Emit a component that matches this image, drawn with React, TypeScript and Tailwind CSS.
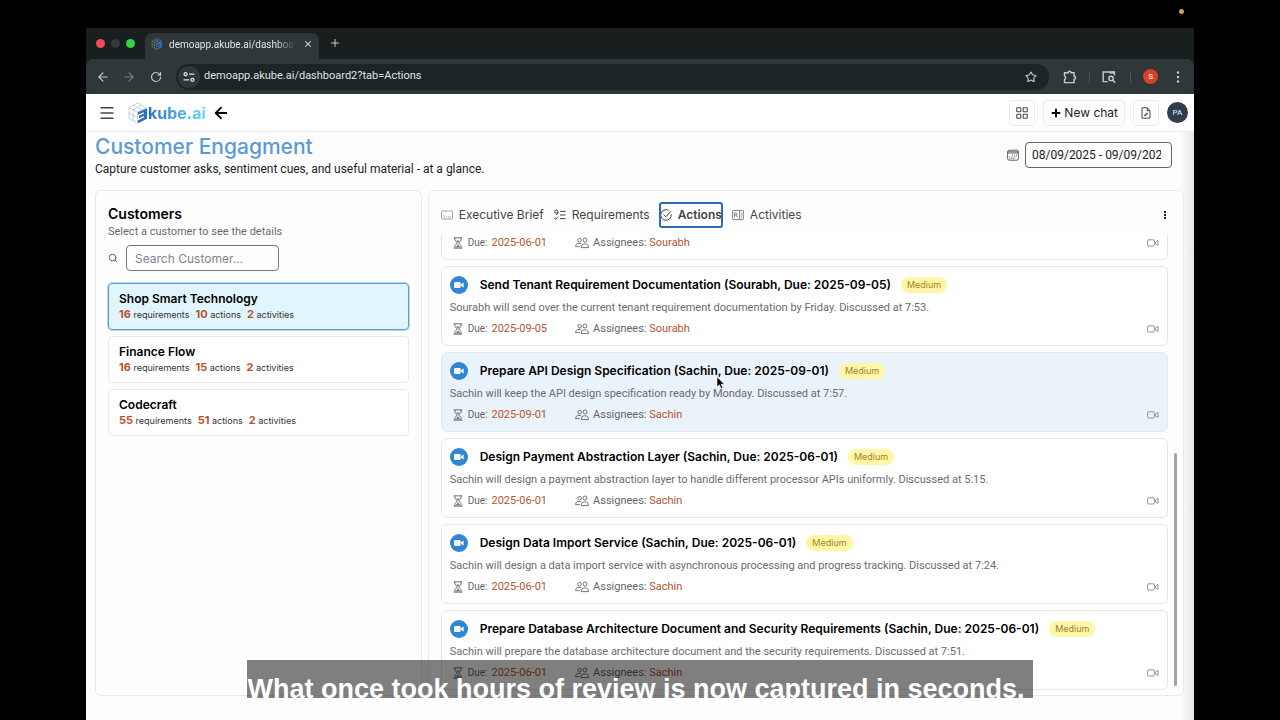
import type { ReactNode } from 'react';
import { ArrowLeft, ArrowRight, LayoutGrid, Menu, Plus, RotateCw, Search, Star, X } from 'lucide-react';

type Customer = { name: string; requirements: number; actions: number; activities: number };
type Action = { title: string; text: string; due: string; assignee: string };

const customers: Customer[] = [
    { name: 'Shop Smart Technology', requirements: 16, actions: 10, activities: 2 },
    { name: 'Finance Flow', requirements: 16, actions: 15, activities: 2 },
    { name: 'Codecraft', requirements: 55, actions: 51, activities: 2 },
];

const actions: Action[] = [
    {
        title: 'Send Tenant Requirement Documentation (Sourabh, Due: 2025-09-05)',
        text: 'Sourabh will send over the current tenant requirement documentation by Friday. Discussed at 7:53.',
        due: '2025-09-05',
        assignee: 'Sourabh',
    },
    {
        title: 'Prepare API Design Specification (Sachin, Due: 2025-09-01)',
        text: 'Sachin will keep the API design specification ready by Monday. Discussed at 7:57.',
        due: '2025-09-01',
        assignee: 'Sachin',
    },
    {
        title: 'Design Payment Abstraction Layer (Sachin, Due: 2025-06-01)',
        text: 'Sachin will design a payment abstraction layer to handle different processor APIs uniformly. Discussed at 5:15.',
        due: '2025-06-01',
        assignee: 'Sachin',
    },
    {
        title: 'Design Data Import Service (Sachin, Due: 2025-06-01)',
        text: 'Sachin will design a data import service with asynchronous processing and progress tracking. Discussed at 7:24.',
        due: '2025-06-01',
        assignee: 'Sachin',
    },
    {
        title: 'Prepare Database Architecture Document and Security Requirements (Sachin, Due: 2025-06-01)',
        text: 'Sachin will prepare the database architecture document and the security requirements. Discussed at 7:51.',
        due: '2025-06-01',
        assignee: 'Sachin',
    },
];

function HourglassIcon() {
    return (
        <svg className="w-3 h-3" viewBox="0 0 12 14" fill="none" stroke="#555" strokeWidth={1}>
            <path d="M1 1h10M1 13h10M2.4 1v2.8L5.2 7l-2.8 3.2V13M9.6 1v2.8L6.8 7l2.8 3.2V13" />
            <path d="M3.8 4h4.4L6 6.4zM6 8.4l2.8 3.8H3.2z" fill="#777" stroke="none" />
        </svg>
    );
}

function PeopleIcon() {
    return (
        <svg className="w-3.5 h-3" viewBox="0 0 14 12" fill="none" stroke="#666" strokeWidth={0.9}>
            <circle cx="4.6" cy="3.2" r="1.8" />
            <circle cx="10" cy="3" r="2" />
            <path d="M6.2 10.6c0-2.4 1-3.8 3.7-3.8s3.6 1.4 3.6 3.8zM.6 9.6h4.2M.6 9.6c0-2 1-3.2 3.4-3.2 1 0 1.7.1 2.3.4" />
        </svg>
    );
}

function VideoIcon() {
    return (
        <svg className="w-3 h-2.5" viewBox="0 0 12 10" fill="none" stroke="#888" strokeWidth={0.9}>
            <rect x=".6" y="1.8" width="6.8" height="6.2" rx="1.2" />
            <path d="M8.4 4.2l2.6-1.8v5L8.4 5.8z" />
        </svg>
    );
}

function CubeMark({ className }: { className: string }) {
    return (
        <svg className={className} viewBox="0 0 20 22" fill="none">
            <path d="M1 5.5L9.5 1 18 5.5 9.5 10zM1 5.5v11l8.5 4.5V10M5.2 3.2l8.6 4.5M13.8 3.2L5.2 7.8v10.8M1 11l8.5 4.5" stroke="#9cb9cf" strokeWidth={0.6} />
            <path d="M10 10.2l9-4v10.6L10 21.2v-3l6-2.8v-1.4l-5 2.2v-2.4l5-2.2v-1.4l-6 2.6z" fill="#2a6fc8" />
        </svg>
    );
}

function Meta({ due, assignee }: { due: string; assignee: string }) {
    return (
        <div className="flex items-center h-4 text-[11px] leading-4 text-[#666]">
            <span className="w-4 flex justify-center"><HourglassIcon /></span>
            <span className="ml-0.5 text-[10px]">Due:</span>
            <span className="ml-1 text-[#b8532f]">{due}</span>
            <span className="ml-7"><PeopleIcon /></span>
            <span className="ml-1">Assignees: <span className="text-[#b8532f]">{assignee}</span></span>
            <span className="ml-auto"><VideoIcon /></span>
        </div>
    );
}

function ActionCard({ action, active }: { action: Action; active: boolean }) {
    return (
        <article className={`h-20 shrink-0 rounded-md border px-2 pt-1.5 ${active ? 'bg-[#eaf2fa] border-[#dfe8f1]' : 'bg-white border-[#e6e6e6]'}`}>
            <div className="flex items-center h-6">
                <span className="w-[18px] h-[18px] rounded-full bg-[#2f86d6] flex items-center justify-center">
                    <svg className="w-3 h-2" viewBox="0 0 12 8" fill="white">
                        <rect x="1" y="1" width="6.6" height="6" rx="1.2" />
                        <path d="M8 3.2l2.6-1.8v5.2L8 4.8z" />
                    </svg>
                </span>
                <h3 className="ml-3 font-[Inter] text-[12px] leading-5 font-semibold text-black">{action.title}</h3>
                <span className="ml-2.5 rounded-full bg-[#fff6a8] px-1.5 font-[Inter] text-[9px] leading-4 text-[#a08328]">Medium</span>
            </div>
            <p className="mt-[3px] mb-[5px] text-[11px] leading-4 text-[#6b6b6b]">{action.text}</p>
            <Meta due={action.due} assignee={action.assignee} />
        </article>
    );
}

function Tab({ icon, label, active = false }: { icon: ReactNode; label: string; active?: boolean }) {
    return (
        <button
            role="tab"
            aria-selected={active}
            className={`flex items-center gap-1.5 h-6 font-[Inter] text-[12px] text-[#444] ${active ? 'font-semibold rounded-xs outline-2 -outline-offset-1 outline-[#2c6bb5]' : ''}`}
        >
            {icon}
            {label}
        </button>
    );
}

function BrowserChrome() {
    return (
        <div className="bg-[#181f1e]">
            <div className="flex items-end h-[31px]">
                <div className="flex items-center gap-1.5 h-[31px] pl-2.5">
                    <span className="w-[9px] h-[9px] rounded-full bg-[#ee4b50]"></span>
                    <span className="w-[9px] h-[9px] rounded-full bg-[#31393a]"></span>
                    <span className="w-[9px] h-[9px] rounded-full bg-[#35cf48]"></span>
                </div>
                <div className="ml-2.5 flex items-center w-[174px] h-[26px] rounded-t-lg bg-[#2f3739] pl-1.5 pr-1.5 pb-1">
                    <CubeMark className="w-3 h-3" />
                    <span className="ml-1.5 flex-1 overflow-hidden whitespace-nowrap text-[10px] text-[#dfe3e4] mask-r-from-85%">demoapp.akube.ai/dashboard2</span>
                    <button aria-label="Close tab" className="ml-2"><X className="w-2.5 h-2.5 text-[#dfe3e4]" strokeWidth={2.5} /></button>
                </div>
                <button aria-label="New tab" className="ml-2.5 mb-2.5"><Plus className="w-3 h-3 text-[#c6cbcc]" /></button>
            </div>
            <div className="flex items-center h-[35px] rounded-t-lg bg-[#2f3739] pl-2.5 pr-3.5 text-[#c6cbcc]">
                <button aria-label="Back"><ArrowLeft className="w-3.5 h-3.5" /></button>
                <button aria-label="Forward" className="ml-3 text-[#747c7e]"><ArrowRight className="w-3.5 h-3.5" /></button>
                <button aria-label="Reload" className="ml-3.5"><RotateCw className="w-3 h-3" strokeWidth={2.4} /></button>
                <div className="ml-3.5 flex flex-1 items-center h-[26px] rounded-full bg-[#1d2425] pl-0.5 pr-3">
                    <span className="w-[22px] h-[22px] rounded-full bg-[#2f3739] flex items-center justify-center">
                        <svg className="w-3 h-3" viewBox="0 0 12 12" fill="none" stroke="#dfe3e4" strokeWidth={1.3}>
                            <circle cx="2.6" cy="3.2" r="1.5" />
                            <circle cx="9.4" cy="8.8" r="1.5" />
                            <path d="M6 3.2h5.4M.6 8.8H6" />
                        </svg>
                    </span>
                    <input aria-label="Address" readOnly value="demoapp.akube.ai/dashboard2?tab=Actions" className="ml-1 flex-1 text-[11px] text-[#dfe3e4] outline-none" />
                    <button aria-label="Bookmark"><Star className="w-3 h-3" strokeWidth={2.2} /></button>
                </div>
                <button aria-label="Extensions" className="ml-3.5">
                    <svg className="w-3.5 h-3.5" viewBox="0 0 14 14" fill="none" stroke="currentColor" strokeWidth={1.4}>
                        <path d="M1.5 2.8h3.6a1.5 1.5 0 013 0h3v3.4a1.5 1.5 0 010 3v3.4H1.5V9.5a1.8 1.8 0 000-3.4z" />
                    </svg>
                </button>
                <span className="ml-3 w-px h-3 bg-[#4b5355]"></span>
                <button aria-label="Search side panel" className="ml-3">
                    <svg className="w-3.5 h-3.5" viewBox="0 0 14 14" fill="none" stroke="currentColor" strokeWidth={1.4}>
                        <path d="M5.6 11.6H1.2V2h11.2v3.4" />
                        <path d="M7.5 2.6h5" strokeWidth={2} />
                        <circle cx="9" cy="8.4" r="2.2" />
                        <path d="M10.6 10l2.6 2.8" />
                    </svg>
                </button>
                <span className="ml-3.5 w-px h-3 bg-[#4b5355]"></span>
                <span className="ml-3 w-[15px] h-[15px] rounded-full bg-[#d9402a] text-[8px] text-white flex items-center justify-center">S</span>
                <button aria-label="Browser menu" className="ml-[18px]">
                    <svg className="w-1 h-3" viewBox="0 0 4 12" fill="currentColor">
                        <circle cx="2" cy="1.5" r="1.2" /><circle cx="2" cy="6" r="1.2" /><circle cx="2" cy="10.5" r="1.2" />
                    </svg>
                </button>
            </div>
        </div>
    );
}

function AppHeader() {
    return (
        <header className="flex items-center h-[38px] shrink-0 border-b border-[#e9e9e9] bg-white px-1.5 pl-3">
            <button aria-label="Menu"><Menu className="w-[18px] h-[18px] text-[#444]" strokeWidth={1.8} /></button>
            <a href="#" aria-label="akube.ai" className="ml-3 flex items-center">
                <CubeMark className="w-5 h-[22px]" />
                <span className="bg-linear-to-r from-[#2b6fcd] to-[#5fdcf4] bg-clip-text text-transparent font-[Inter] text-[16px] leading-5 font-bold">kube.ai</span>
            </a>
            <button aria-label="Go back" className="ml-1.5"><ArrowLeft className="w-[18px] h-[18px] text-black" strokeWidth={2.4} /></button>
            <button aria-label="Apps" className="ml-auto w-[26px] h-[26px] rounded border border-[#ececec] flex items-center justify-center">
                <LayoutGrid className="w-3.5 h-3.5 text-[#444]" strokeWidth={1.8} />
            </button>
            <button className="ml-2 flex items-center gap-0.5 h-[26px] rounded border border-[#ececec] px-1.5 font-[Inter] text-[12px] text-[#222]">
                <Plus className="w-3 h-3 text-black" strokeWidth={4} />
                New chat
            </button>
            <button aria-label="Notes" className="ml-2 w-[26px] h-[26px] rounded border border-[#ececec] flex items-center justify-center">
                <svg className="w-3 h-3" viewBox="0 0 12 12" fill="none" stroke="#444" strokeWidth={1}>
                    <path d="M2 .8h5.2L10 3.6v7.6H2zM7.2 .8v2.8H10M4.2 8.6l2.6-2.8.9.9-2.6 2.2z" />
                </svg>
            </button>
            <span className="ml-2 w-[21px] h-[21px] rounded-full bg-[#2d3e50] text-[8px] font-medium text-[#cfd8e0] flex items-center justify-center">PA</span>
        </header>
    );
}

function CustomersPanel() {
    return (
        <section className="w-[30%] shrink-0 rounded-md border border-[#e9e9e9] bg-[#fefefe] px-3 pt-3.5">
            <h2 className="font-[Inter] text-[14px] leading-[18px] font-semibold text-black">Customers</h2>
            <p className="mt-0.5 text-[11px] leading-3.5 text-[#6b6b6b]">Select a customer to see the details</p>
            <div className="mt-1.5 flex items-center">
                <label htmlFor="customer-search" aria-label="Search" className="w-[18px]"><Search className="w-2.5 h-2.5 text-[#444]" /></label>
                <input id="customer-search" placeholder="Search Customer..." className="w-[153px] h-[26px] rounded border border-[#777] px-2 font-[Inter] text-[12px] placeholder:text-[#7d868f]" />
            </div>
            <ul className="mt-3 space-y-1.5">
                {customers.map((c, i) => (
                    <li key={c.name}>
                        <button className={`block w-full rounded px-2.5 py-[7px] text-left font-[Inter] ${i === 0 ? 'border border-[#5b9bd5] bg-[#e1f5fc] outline outline-[#5b9bd5]/40' : 'border border-[#e9e9e9] bg-white'}`}>
                            <span className="block text-[12px] leading-4 font-semibold text-black">{c.name}</span>
                            <span className="flex gap-1.5 text-[9px] leading-3.5 text-[#333]">
                                <span><b className="text-[11px] text-[#b8532f]">{c.requirements}</b> requirements</span>
                                <span><b className="text-[11px] text-[#b8532f]">{c.actions}</b> actions</span>
                                <span><b className="text-[11px] text-[#b8532f]">{c.activities}</b> activities</span>
                            </span>
                        </button>
                    </li>
                ))}
            </ul>
        </section>
    );
}

function ActionsPanel() {
    return (
        <section className="flex flex-1 min-w-0 flex-col rounded-md border border-[#e9e9e9] bg-[#fefefe] pl-3 pr-1.5 pt-3 pb-[5px]">
            <div className="flex items-center pr-2.5 pb-1.5">
                <div role="tablist" className="flex items-center gap-2.5">
                    <Tab
                        label="Executive Brief"
                        icon={
                            <svg className="w-3 h-2.5" viewBox="0 0 12 10" fill="none" stroke="#999" strokeWidth={0.9}>
                                <rect x=".5" y="1" width="11" height="8" rx=".8" />
                                <path d="M2.5 7h1.8M5 7h1.2M7 7h2.6M2.5 5.6h.8" />
                            </svg>
                        }
                    />
                    <Tab
                        label="Requirements"
                        icon={
                            <svg className="w-3 h-3" viewBox="0 0 12 12" fill="none" stroke="#444" strokeWidth={1}>
                                <rect x=".8" y="1.2" width="3" height="3" rx="1" />
                                <path d="M3.8 3v1.4L2.2 6M.6 9l1.2 1.3 2.2-2.6M6 2.4h5.6M6 6h5.6M6 9.6h5.6" />
                            </svg>
                        }
                    />
                    <Tab
                        active
                        label="Actions"
                        icon={
                            <svg className="w-3 h-3" viewBox="0 0 12 12" fill="none" stroke="#444" strokeWidth={1}>
                                <path d="M11.2 5.2A5.3 5.3 0 118.6 1.4M3.6 5.6l2.2 2.2L11 2.2" />
                            </svg>
                        }
                    />
                    <Tab
                        label="Activities"
                        icon={
                            <svg className="w-3 h-3" viewBox="0 0 12 12" fill="none" stroke="#777" strokeWidth={0.9}>
                                <rect x=".6" y="1.4" width="10.8" height="9.2" rx=".6" />
                                <path d="M7.6 1.4v9.2M9 4h1.2M9 6h1.2M9 8h1.2M2.4 8.4V4h1.6c1.6 0 1.6 2.2 0 2.2H2.4M4.2 6.2l1.4 2.2" />
                            </svg>
                        }
                    />
                </div>
                <button aria-label="More" className="ml-auto">
                    <svg className="w-1 h-2" viewBox="0 0 4 8" fill="#222">
                        <path d="M1 0h2v2H1zM1 3h2v2H1zM1 6h2v2H1z" />
                    </svg>
                </button>
            </div>
            <div className="flex flex-1 min-h-0 gap-1.5">
                <div className="flex flex-1 min-w-0 flex-col justify-end gap-1.5 overflow-hidden">
                    <div className="shrink-0 rounded-b-md border border-t-0 border-[#e6e6e6] bg-white px-2 pb-2">
                        <Meta due="2025-06-01" assignee="Sourabh" />
                    </div>
                    {actions.map((a, i) => (
                        <ActionCard key={a.title} action={a} active={i === 1} />
                    ))}
                </div>
                <div className="w-[3px] h-[51%] mb-1 self-end rounded-full bg-[#a3a3a3]"></div>
            </div>
        </section>
    );
}

export default function App() {
    return (
        <div className="relative flex h-screen flex-col overflow-hidden bg-black px-[86px] pt-7 font-[Roboto,sans-serif]">
            <span className="absolute right-24 top-[9px] w-[5px] h-[5px] rounded-full bg-[#e09a4a]"></span>
            <BrowserChrome />
            <AppHeader />
            <main className="flex flex-1 min-h-0 flex-col bg-[linear-gradient(to_left,#e6e6e6,#fdfdfd_14px)] pl-[9px] pr-2.5 pb-6">
                <div className="flex items-start h-[58px] shrink-0">
                    <div>
                        <h1 className="mt-0.5 font-[Inter] text-[21px] leading-[26px] font-medium text-[#5b9bd5]">Customer Engagment</h1>
                        <p className="text-[12px] leading-[18px] text-[#222]">Capture customer asks, sentiment cues, and useful material - at a glance.</p>
                    </div>
                    <div className="ml-auto mr-3 mt-2.5 flex items-center gap-1.5">
                        <label htmlFor="date-range" aria-label="Date range">
                            <svg className="w-3 h-3" viewBox="0 0 12 12" fill="none" stroke="#555" strokeWidth={0.9}>
                                <rect x=".6" y="1.2" width="10.8" height="10" rx="1.6" />
                                <path d="M.6 2.8h10.8M.6 4h10.8" />
                                <path d="M5 6.2h5M2.4 8h7.4M2.4 9.6h5" strokeDasharray="1 1" />
                            </svg>
                        </label>
                        <input id="date-range" defaultValue="08/09/2025 - 09/09/2025" className="w-[147px] h-[26px] rounded border border-[#666] pl-1.5 pr-2.5 text-[12px] text-[#222]" />
                    </div>
                </div>
                <div className="flex flex-1 min-h-0 gap-1.5">
                    <CustomersPanel />
                    <ActionsPanel />
                </div>
            </main>

            {/* mouse pointer */}
            <svg className="absolute left-[716px] top-[376px] w-2.5 h-3.5" viewBox="0 0 10 14" fill="black" stroke="white" strokeWidth={0.6}>
                <path d="M1 1v10l2.4-2.2L5 12.6l1.7-.8L5.1 8.2h3.4z" />
            </svg>

            {/* video caption */}
            <div className="absolute inset-x-0 top-[660px] flex justify-center">
                <p className="h-[38px] bg-black/50 pr-2 pt-3 whitespace-nowrap font-['Liberation_Sans',Arial,sans-serif] text-[27px] leading-[34px] font-bold text-white">
                    What once took hours of review is now captured in seconds.
                </p>
            </div>
        </div>
    );
}
